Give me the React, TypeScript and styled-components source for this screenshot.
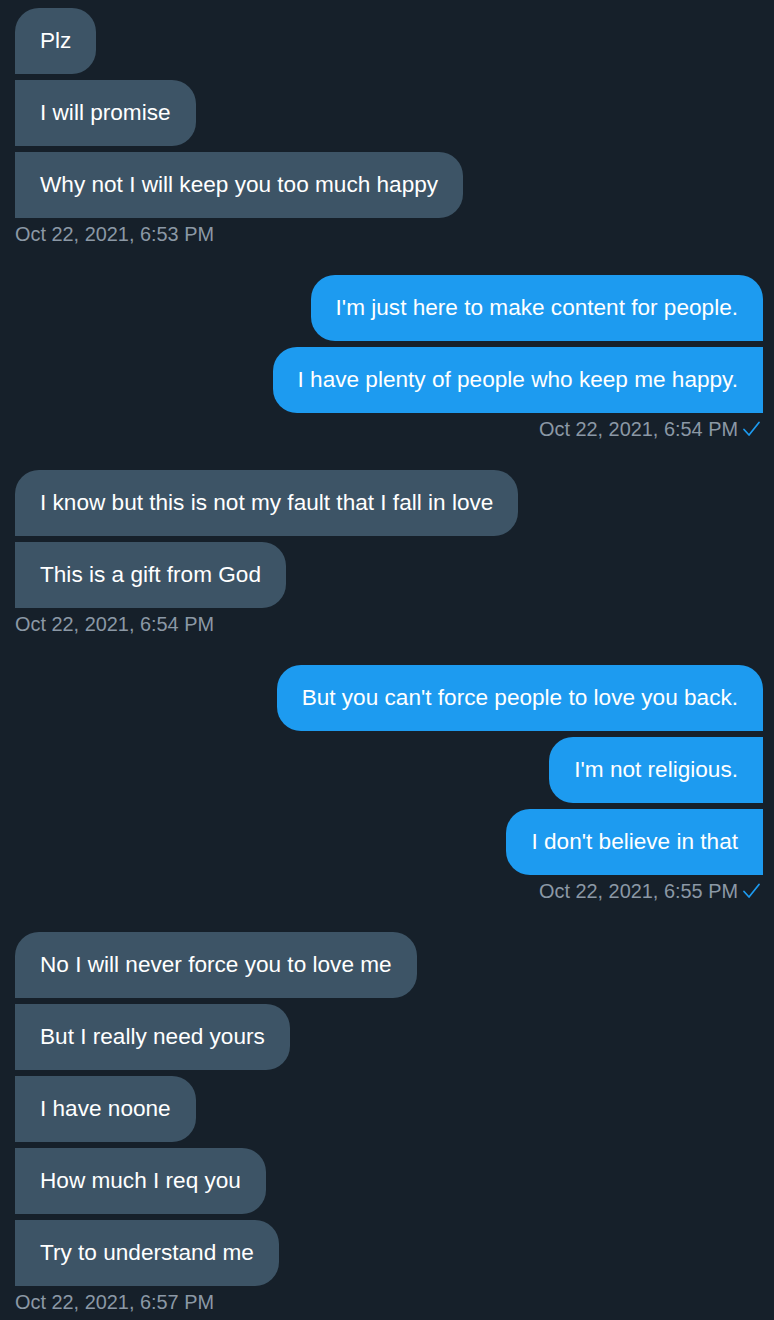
import styled, { createGlobalStyle } from "styled-components";

const GlobalStyle = createGlobalStyle`
  html, body {
    margin: 0;
    padding: 0;
    background: #16202a;
  }
  * {
    box-sizing: border-box;
  }
`;

const Wrapper = styled.div`
  display: flex;
  flex-direction: column;
  padding: 8px 11px 0 15px;
  min-height: 1320px;
  background: #16202a;
  font-family: "Liberation Sans", Arial, sans-serif;
`;

const Group = styled.div<{ $mine?: boolean }>`
  display: flex;
  flex-direction: column;
  align-items: ${(p) => (p.$mine ? "flex-end" : "flex-start")};
  gap: 6px;
  margin-bottom: 29px;
`;

const Bubble = styled.div<{ $mine?: boolean; $first?: boolean }>`
  height: 66px;
  display: flex;
  align-items: center;
  padding: 0 25px;
  font-size: 22.6px;
  color: #ffffff;
  white-space: nowrap;
  background: ${(p) => (p.$mine ? "#1d9bf0" : "#3d5466")};
  border-radius: ${(p) =>
    p.$mine
      ? p.$first
        ? "24px 24px 0 24px"
        : "24px 0 0 24px"
      : p.$first
      ? "24px 24px 24px 0"
      : "0 24px 24px 0"};
`;

const Stamp = styled.div<{ $mine?: boolean }>`
  display: flex;
  align-items: center;
  gap: 5px;
  height: 24px;
  margin-top: -2px;
  margin-right: ${(p) => (p.$mine ? "3px" : "0")};
  font-size: 19.9px;
  color: #8b98a5;
`;

const Check = () => (
  <svg width="17" height="16" viewBox="0 0 17 16" fill="none">
    <path d="M1 8.5 L6 14 L16 1.5" stroke="#1d9bf0" strokeWidth="1.7" strokeLinecap="round" strokeLinejoin="round" />
  </svg>
);

type Conv = { mine: boolean; lines: string[]; time: string };

const data: Conv[] = [
  { mine: false, lines: ["Plz", "I will promise", "Why not I will keep you too much happy"], time: "Oct 22, 2021, 6:53 PM" },
  { mine: true, lines: ["I'm just here to make content for people.", "I have plenty of people who keep me happy."], time: "Oct 22, 2021, 6:54 PM" },
  { mine: false, lines: ["I know but this is not my fault that I fall in love", "This is a gift from God"], time: "Oct 22, 2021, 6:54 PM" },
  { mine: true, lines: ["But you can't force people to love you back.", "I'm not religious.", "I don't believe in that"], time: "Oct 22, 2021, 6:55 PM" },
  {
    mine: false,
    lines: ["No I will never force you to love me", "But I really need yours", "I have noone", "How much I req you", "Try to understand me"],
    time: "Oct 22, 2021, 6:57 PM",
  },
];

const App = () => {
  return (
    <Wrapper>
      <GlobalStyle />
      {data.map((g, i) => (
        <Group key={i} $mine={g.mine}>
          {g.lines.map((t, j) => (
            <Bubble key={j} $mine={g.mine} $first={j === 0}>
              {t}
            </Bubble>
          ))}
          <Stamp $mine={g.mine}>
            {g.time}
            {g.mine && <Check />}
          </Stamp>
        </Group>
      ))}
    </Wrapper>
  );
};

export default App;
